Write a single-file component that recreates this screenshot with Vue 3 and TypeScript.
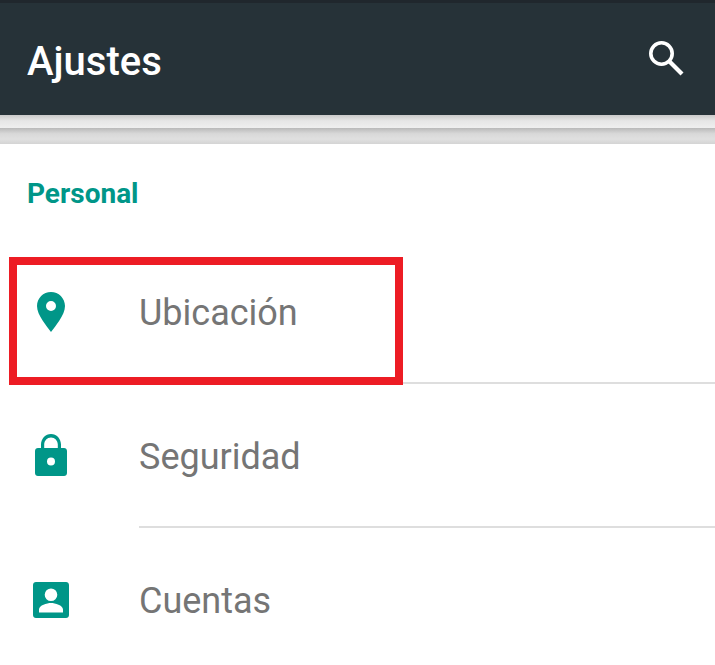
<script setup lang="ts">
const rows = [
  { label: 'Ubicación', icon: 'pin' },
  { label: 'Seguridad', icon: 'lock' },
  { label: 'Cuentas', icon: 'account' }
]
</script>

<template>
  <main class="screen">
    <div class="status"></div>
    <header class="toolbar">
      <h1 class="title">Ajustes</h1>
      <svg class="search" viewBox="0 0 36 36" width="36" height="36">
        <circle cx="12.5" cy="12.500" r="10.700" fill="none" stroke="#fff" stroke-width="3.600" />
        <path d="M20.500 20.500 L33 33" fill="none" stroke="#fff" stroke-width="4.200" />
      </svg>
    </header>
    <div class="shadow"></div>
    <div class="band"></div>

    <section class="list">
      <h2 class="section">Personal</h2>
      <div v-for="row in rows" :key="row.label" class="row">
        <div class="icon">
          <svg v-if="row.icon === 'pin'" viewBox="0 0 28 40" width="28" height="40">
            <path
              fill="#009688"
              fill-rule="evenodd"
              d="M14 0C6.300 0 0 6.200 0 14c0 4.800 2.400 9.500 5.600 14.500C8.300 32.700 11.300 36.500 14 40c2.700-3.500 5.700-7.300 8.400-11.500C25.600 23.500 28 18.800 28 14 28 6.200 21.700 0 14 0zm0 9a5 5 0 1 1 0 10 5 5 0 0 1 0-10z"
            />
          </svg>
          <svg v-else-if="row.icon === 'lock'" class="lock" viewBox="0 0 32 42" width="32" height="42">
            <path
              fill="#009688"
              fill-rule="evenodd"
              d="M6 14V10.500C6 4.700 10.400 0 16 0s10 4.700 10 10.500V14h3c1.700 0 3 1.300 3 3v22c0 1.700-1.300 3-3 3H3c-1.700 0-3-1.300-3-3V17c0-1.700 1.300-3 3-3h3zm3.200 0h13.600V10.500c0-3.900-3-7.100-6.800-7.100s-6.800 3.200-6.800 7.100V14zM16 23.500a4 4 0 1 0 0 8 4 4 0 0 0 0-8z"
            />
          </svg>
          <svg v-else viewBox="0 0 36 36" width="36" height="36">
            <path
              fill="#009688"
              fill-rule="evenodd"
              d="M3 0h30c1.700 0 3 1.300 3 3v30c0 1.700-1.300 3-3 3H3c-1.700 0-3-1.300-3-3V3c0-1.700 1.300-3 3-3zm15 6.500a6.300 6.300 0 1 0 0 12.600 6.300 6.300 0 0 0 0-12.600zM6 30.500h24v-3c0-4.300-8-6.500-12-6.500s-12 2.200-12 6.500v3z"
            />
          </svg>
        </div>
        <div class="label">{{ row.label }}</div>
      </div>
      <div class="highlight"></div>
    </section>
  </main>
</template>

<style>
html,
body {
  margin: 0;
  background: #fff;
}
</style>

<style scoped>
.screen {
  width: 715px;
  height: 665px;
  overflow: hidden;
  background: #fff;
  font-family: Roboto, 'Liberation Sans', sans-serif;
}

.status {
  height: 3px;
  background: #20272d;
}

.toolbar {
  height: 112px;
  padding: 0 30px 0 27px;
  box-sizing: border-box;
  display: flex;
  align-items: center;
  justify-content: space-between;
  background: #263238;
}

.title {
  margin: 0;
  padding-top: 6px;
  color: #fff;
  font-size: 40px;
  font-weight: 500;
  line-height: 1;
}

.shadow {
  height: 13px;
  background: linear-gradient(to bottom, #c9c9c9, #e6e6e6 45%, #efefef);
}

.band {
  height: 16px;
  box-sizing: border-box;
  background: linear-gradient(to bottom, #b9b9b9, #d8d8d8 35%, #e0e0e0 70%, #d4d4d4);
}

.list {
  position: relative;
}

.section {
  margin: 0;
  height: 96px;
  padding: 33px 0 0 27px;
  box-sizing: border-box;
  color: #009688;
  font-size: 28px;
  font-weight: 700;
  line-height: 34px;
}

.row {
  height: 144px;
  display: flex;
  align-items: center;
}

.icon {
  width: 102px;
  display: flex;
  justify-content: center;
  flex: none;
}

.lock {
  margin-bottom: 2px;
}

.label {
  flex: 1;
  margin-left: 37px;
  height: 144px;
  padding-top: 4px;
  display: flex;
  align-items: center;
  box-sizing: border-box;
  border-bottom: 2px solid #dedede;
  color: #757575;
  font-size: 36px;
  line-height: 1;
}

.highlight {
  position: absolute;
  left: 9px;
  top: 113px;
  width: 394px;
  height: 128px;
  box-sizing: border-box;
  border: 8px solid #ed1c24;
}
</style>
